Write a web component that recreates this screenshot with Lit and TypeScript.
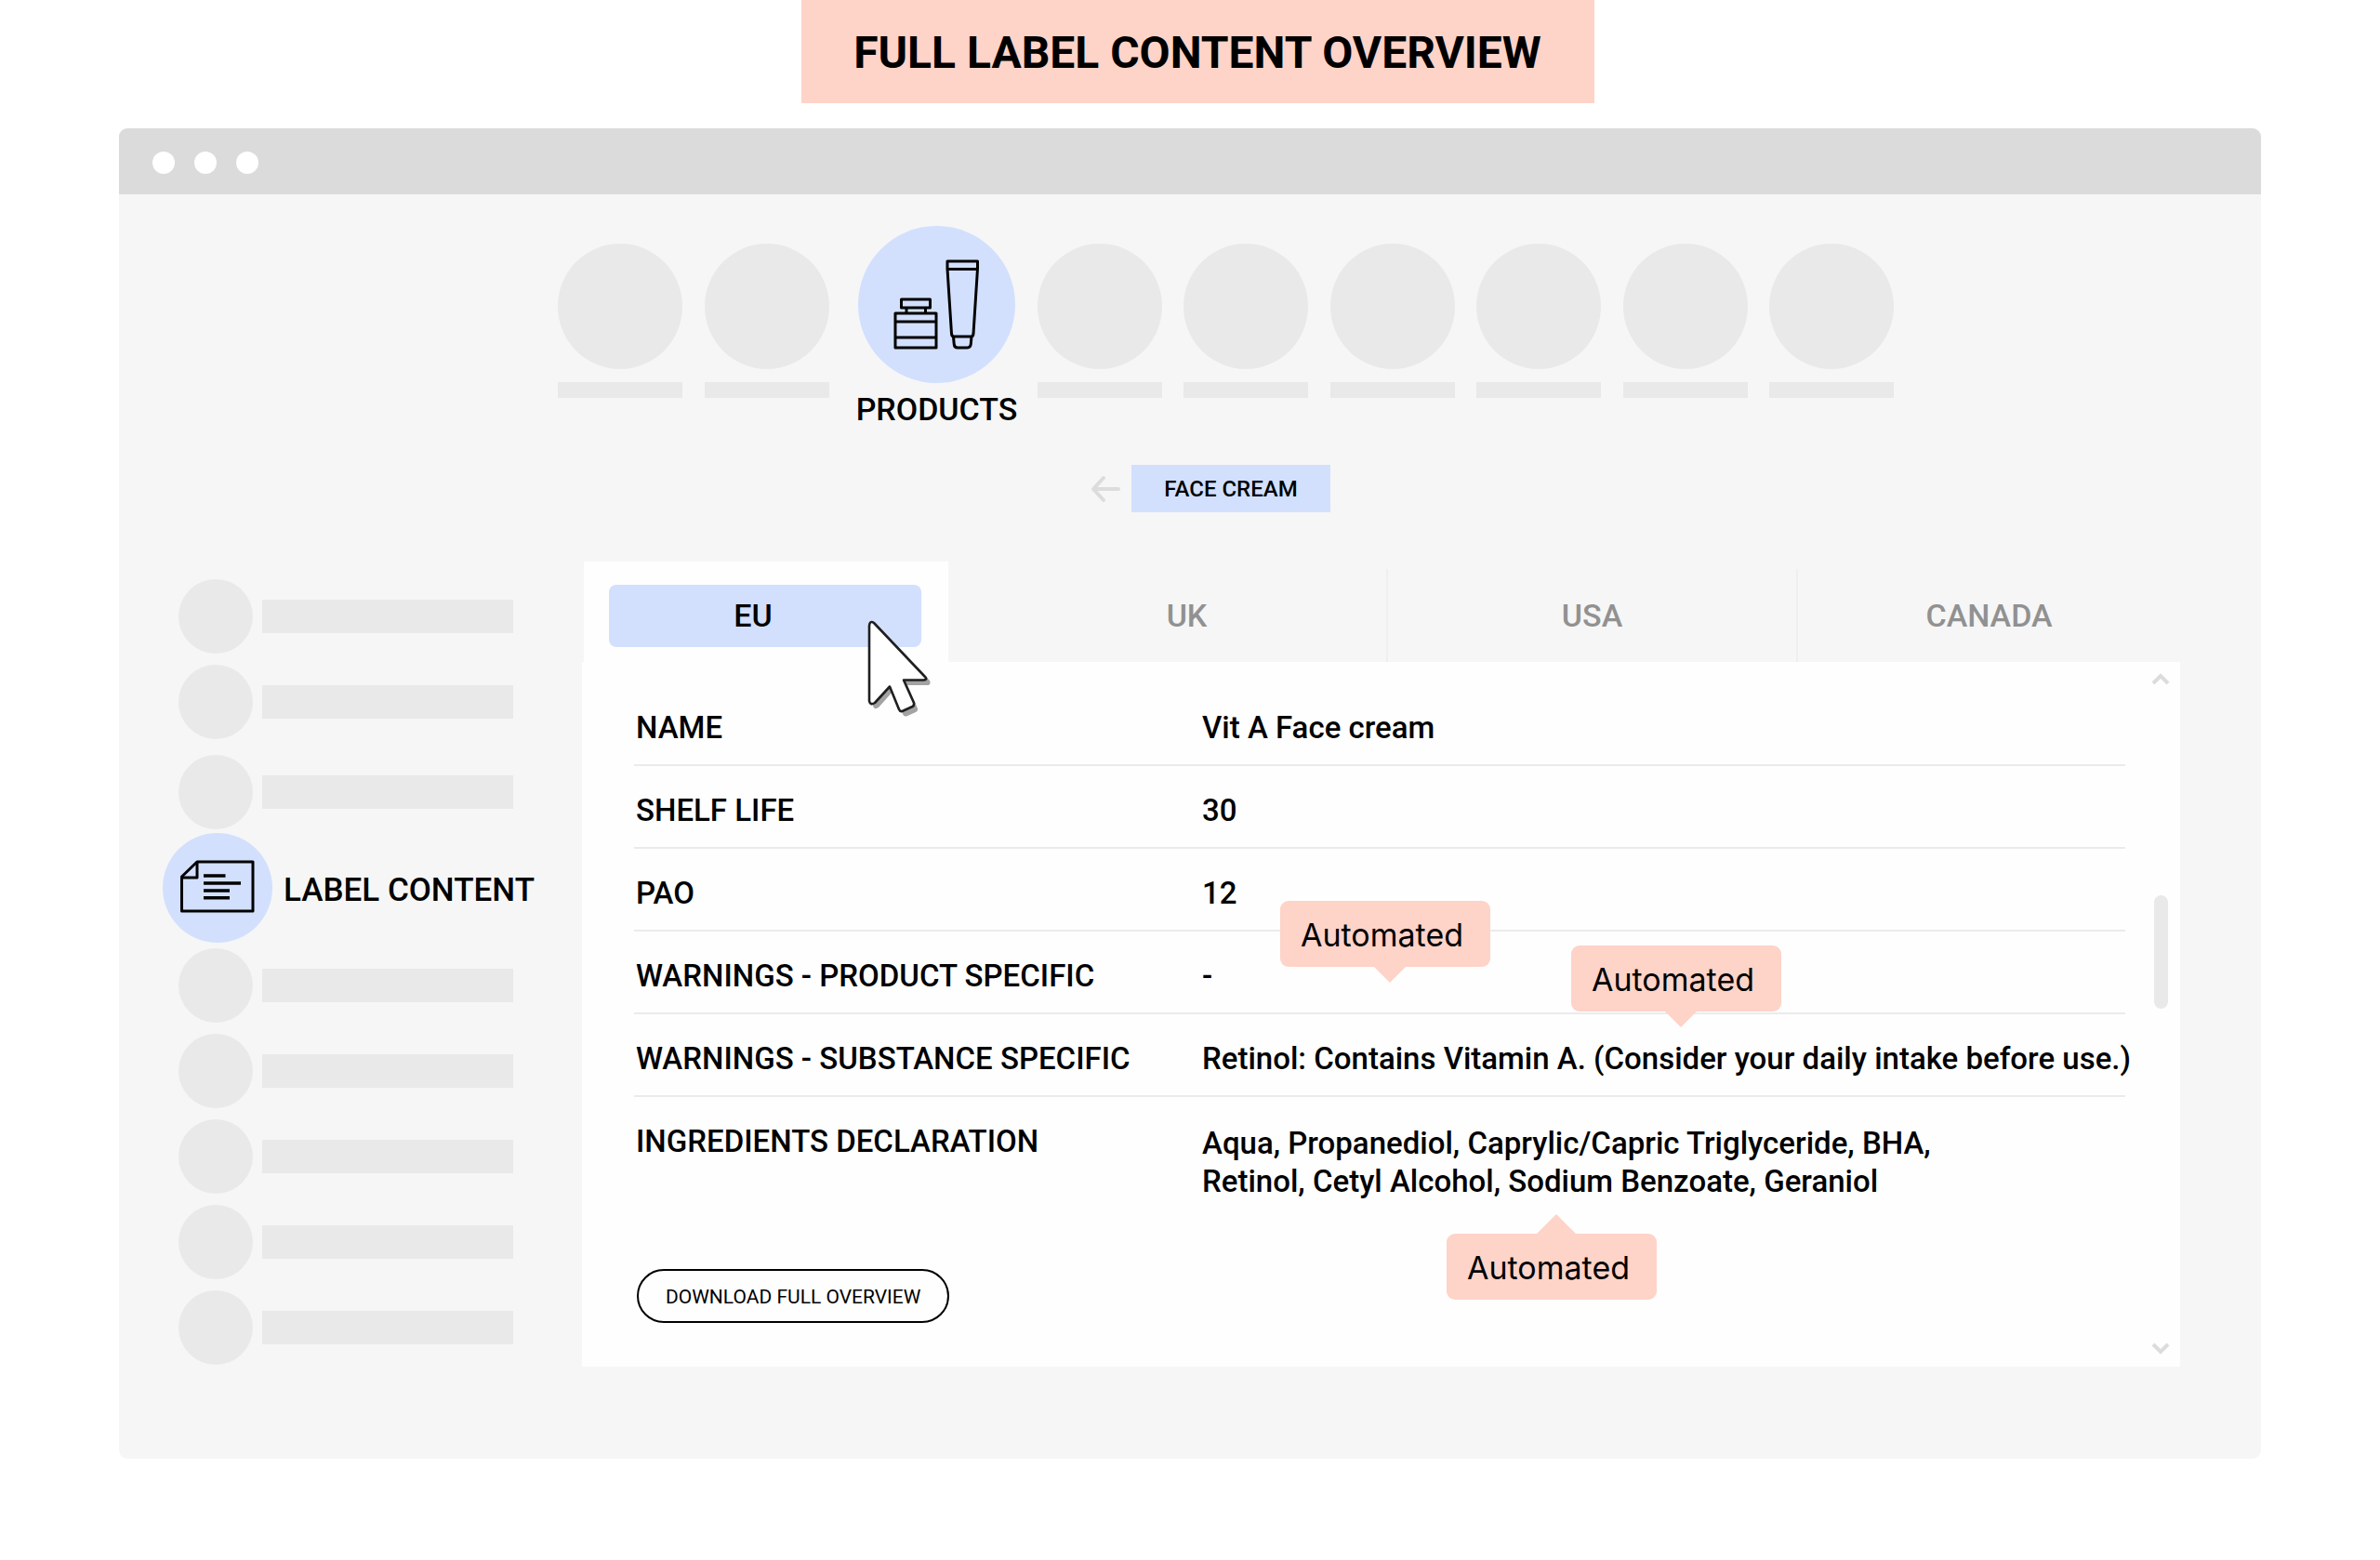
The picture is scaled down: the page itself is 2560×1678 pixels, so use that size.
import { LitElement, html, svg, css, nothing } from "lit";
import { customElement, state } from "lit/decorators.js";
import { classMap } from "lit/directives/class-map.js";

type Chip = "low" | "high" | "below";

interface Row {
  label: string;
  value: string[];
  chip?: Chip;
}

const ROWS: Row[] = [
  { label: "NAME", value: ["Vit A Face cream"] },
  { label: "SHELF LIFE", value: ["30"] },
  { label: "PAO", value: ["12"] },
  { label: "WARNINGS - PRODUCT SPECIFIC", value: ["-"], chip: "low" },
  {
    label: "WARNINGS - SUBSTANCE SPECIFIC",
    value: ["Retinol: Contains Vitamin A. (Consider your daily intake before use.)"],
    chip: "high",
  },
  {
    label: "INGREDIENTS DECLARATION",
    value: [
      "Aqua, Propanediol, Caprylic/Capric Triglyceride, BHA,",
      "Retinol, Cetyl Alcohol, Sodium Benzoate, Geraniol",
    ],
    chip: "below",
  },
];

const REGIONS = ["EU", "UK", "USA", "CANADA"];

const productsIcon = svg`
  <svg class="glyph" viewBox="0 0 169 169" aria-hidden="true">
    <rect x="46.5" y="79" width="31" height="9" />
    <path d="M52 88V94M72.5 88V94" />
    <rect x="40" y="94" width="44" height="37" />
    <path d="M40 103H84M40 120H84" />
    <path d="M96 38H128.5V46L124 116Q123.700 119 121.500 119H103Q100.800 119 100.500 116L96 46Z" />
    <path d="M96 46.500H128.500" />
    <path d="M102.500 119L103.200 127Q103.500 131 107 131H117.500Q121 131 121.300 127L122 119" />
  </svg>`;

const labelIcon = svg`
  <svg class="glyph" viewBox="0 0 118 118" aria-hidden="true">
    <path d="M37 31H97V84H20.500V47Z" />
    <path d="M37 31V48H20.500" />
    <path class="thick" d="M44 46H67.500M44 54H84M44 62H72M44 69.700H72" />
  </svg>`;

@customElement("app-root")
export class AppRoot extends LitElement {
  @state() private region = "EU";

  static styles = css`
    :host {
      display: block;
      box-sizing: border-box;
      min-height: 100vh;
      background: #fff;
      color: #000;
      font-family: Roboto, "Liberation Sans", sans-serif;
      font-size: 33px;
      font-weight: 500;
      line-height: 41px;
    }
    *, *::before, *::after { box-sizing: border-box; }
    button, a { font: inherit; color: inherit; text-decoration: none; }
    button { border: 0; margin: 0; padding: 0; background: none; cursor: pointer; }
    svg { display: block; }

    .banner { display: flex; justify-content: center; padding-left: 17px; }
    .banner h1 {
      margin: 0;
      padding: 29px 57px 26px 56px;
      background: #fed3c8;
      font-size: 48px;
      font-weight: 700;
      line-height: 56px;
      white-space: nowrap;
    }

    .window {
      margin: 27px 128px 0;
      border-radius: 9px;
      overflow: hidden;
      background: #f6f6f6;
    }
    .titlebar {
      display: flex;
      align-items: center;
      gap: 21px;
      height: 71px;
      padding: 3px 36px 0;
      background: #dbdbdb;
    }
    .dot { width: 24px; height: 24px; border-radius: 50%; background: #fff; }

    .products {
      display: flex;
      justify-content: space-between;
      padding: 34px 395px 0 472px;
    }
    .stub { display: grid; gap: 14px; width: 134px; margin-top: 19px; align-content: start; }
    .stub .disc { height: 135px; }
    .stub .line { height: 17px; }
    .disc { border-radius: 50%; background: #e9e9e9; }
    .line { background: #e9e9e9; }
    .product {
      display: flex;
      flex-direction: column;
      align-items: center;
      gap: 8px;
      width: 169px;
      margin-left: 8px;
      font-size: 34px;
      white-space: nowrap;
    }
    .bubble { flex: none; border-radius: 50%; background: #d2e0fe; }
    .product .bubble { width: 169px; height: 169px; }
    .glyph { width: 100%; height: 100%; fill: none; stroke: #000; stroke-width: 3; stroke-linejoin: round; }
    .thick { stroke-width: 3.5; }

    .crumb {
      display: flex;
      justify-content: center;
      align-items: center;
      gap: 12px;
      margin-top: 39px;
      padding-left: 44px;
    }
    .crumb svg { width: 32px; height: 30px; fill: none; stroke: #dcdcdc; stroke-width: 4; stroke-linecap: round; stroke-linejoin: round; }
    .crumb a {
      padding: 6px 35px 4px;
      background: #d2e0fe;
      font-size: 24px;
    }

    .main {
      display: grid;
      grid-template-columns: 434px minmax(0, 1fr);
      padding: 53px 87px 99px 64px;
    }

    .side { display: flex; flex-direction: column; gap: 12px; padding-top: 19px; }
    .item { display: grid; grid-template-columns: 80px 270px; gap: 10px; align-items: center; }
    .item .disc { height: 80px; }
    .item .line { height: 36px; }
    .item:has(+ .current) { margin-top: 5px; }
    .current {
      display: flex;
      align-items: center;
      gap: 12px;
      margin: -8px 0 -6px -17px;
      font-size: 35px;
      white-space: nowrap;
    }
    .current .bubble { width: 118px; height: 118px; }
    .current span { padding-top: 5px; }

    .tabs {
      position: relative;
      display: grid;
      grid-template-columns: 394fr 473fr 441fr 411fr;
      height: 108px;
    }
    .tab {
      margin-top: 8px;
      border-right: 2px solid #efefef;
      color: #919191;
      font-size: 34px;
    }
    .tab:last-of-type { border-right: 0; }
    .tab:nth-child(2) { padding-left: 42px; }
    .tab.on {
      margin: 0 0 0 2px;
      padding: 25px 29px 16px 27px;
      border: 0;
      background: #fefefe;
      color: #000;
    }
    .tab.on span {
      display: block;
      padding: 13px 26px 13px 0;
      border-radius: 8px;
      background: #d2e0fe;
    }
    .cursor {
      position: absolute;
      z-index: 1;
      left: 304px;
      top: 60px;
      width: 76px;
      height: 112px;
      pointer-events: none;
    }

    .panel { display: flex; justify-content: space-between; background: #fefefe; }
    .sheet { flex: 1; min-width: 0; padding: 23px 30px 47px 56px; }
    table { width: 100%; table-layout: fixed; border-collapse: separate; border-spacing: 0; }
    th, td {
      position: relative;
      padding: 27px 0 19px;
      border-bottom: 2px solid #ebebeb;
      font-weight: inherit;
      text-align: left;
      vertical-align: top;
      white-space: nowrap;
    }
    th { width: 611px; padding-left: 2px; }
    tr:last-child > * { border-bottom: 0; padding-bottom: 0; }
    tr:last-child > td { padding-top: 29px; }
    td > span { display: block; }

    .chip {
      position: absolute;
      padding: 16px 29px 14px 22px;
      border-radius: 9px;
      background: #fed3c8;
      font-family: Inter, "Liberation Sans", sans-serif;
      font-size: 34px;
      font-weight: 400;
    }
    .chip::after {
      content: "";
      position: absolute;
      top: 100%;
      left: 101px;
      width: 34px;
      height: 17px;
      background: inherit;
      clip-path: polygon(0 0, 100% 0, 50% 100%);
    }
    .chip.low { left: 84px; top: -33px; z-index: 1; }
    .chip.high { left: 397px; top: -74px; z-index: 1; }
    .chip.below { left: 263px; top: 147px; }
    .chip.below::after {
      top: auto;
      bottom: 100%;
      left: 97px;
      width: 42px;
      height: 21px;
      clip-path: polygon(0 100%, 50% 0, 100% 100%);
    }

    .download {
      margin: 74px 0 0 3px;
      padding: 8px 29px 5px;
      border: 2px solid #000;
      border-radius: 29px;
      background: #fefefe;
      font-size: 21px;
      font-weight: 400;
    }

    .scroll { display: flex; flex-direction: column; align-items: center; width: 16px; margin-right: 13px; padding: 12px 0 13px; }
    .scroll svg { width: 20px; height: 13px; fill: none; stroke: #dcdcdc; stroke-width: 4; }
    .thumb { width: 15px; height: 122px; margin: 226px 0 auto; border-radius: 8px; background: #e9e9e9; }
  `;

  private stubs(n: number) {
    return Array.from({ length: n }, () => html`
      <div class="stub"><div class="disc"></div><div class="line"></div></div>`);
  }

  private items(n: number) {
    return Array.from({ length: n }, () => html`
      <div class="item"><div class="disc"></div><div class="line"></div></div>`);
  }

  render() {
    return html`
      <header class="banner"><h1>FULL LABEL CONTENT OVERVIEW</h1></header>
      <div class="window">
        <div class="titlebar">
          <span class="dot"></span><span class="dot"></span><span class="dot"></span>
        </div>

        <nav class="products">
          ${this.stubs(2)}
          <a class="product" href="#products"><span class="bubble">${productsIcon}</span>PRODUCTS</a>
          ${this.stubs(6)}
        </nav>

        <div class="crumb">
          <svg viewBox="0 0 32 30" aria-hidden="true"><path d="M30 15H3M14 3L3 15L14 27" /></svg>
          <a href="#face-cream">FACE CREAM</a>
        </div>

        <div class="main">
          <nav class="side">
            ${this.items(3)}
            <a class="current" href="#label-content"><div class="bubble">${labelIcon}</div><span>LABEL CONTENT</span></a>
            ${this.items(5)}
          </nav>

          <section>
            <div class="tabs" role="tablist">
              ${REGIONS.map((r) => html`
                <button role="tab" aria-selected=${this.region === r}
                  class=${classMap({ tab: true, on: this.region === r })}
                  @click=${() => (this.region = r)}><span>${r}</span></button>`)}
              <svg class="cursor" viewBox="0 0 76 112" aria-hidden="true">
                <path fill="#a3a3a3" transform="translate(4 5)"
                  d="M5 8Q6 3 11 6L66 63Q68 68 63 68H42L53 93Q53.500 96 51 97L41 101.500Q38 102 37 99L27 74L11 92Q6 95 5 90Z" />
                <path fill="#fff" stroke="#1f1f1f" stroke-width="2.600" stroke-linejoin="round"
                  d="M5 9Q5.500 3 10 6L65 64Q68 67 63.500 67.500H42L53 92Q53.500 95 51.500 96L40.500 101Q38 101.500 37 99L27 74.500L11 92Q6 95 5 90Z" />
              </svg>
            </div>
            <div class="panel">
              <div class="sheet">
                <table>
                  <tbody>
                    ${ROWS.map((row) => html`
                      <tr>
                        <th scope="row">${row.label}</th>
                        <td>
                          ${row.value.map((v) => html`<span>${v}</span>`)}
                          ${row.chip ? html`<div class="chip ${row.chip}">Automated</div>` : nothing}
                        </td>
                      </tr>`)}
                  </tbody>
                </table>
                <button class="download">DOWNLOAD FULL OVERVIEW</button>
              </div>
              <div class="scroll">
                <svg viewBox="0 0 20 13" aria-hidden="true"><path d="M2 11L10 3L18 11" /></svg>
                <div class="thumb"></div>
                <svg viewBox="0 0 20 13" aria-hidden="true"><path d="M2 2L10 10L18 2" /></svg>
              </div>
            </div>
          </section>
        </div>
      </div>
    `;
  }
}
